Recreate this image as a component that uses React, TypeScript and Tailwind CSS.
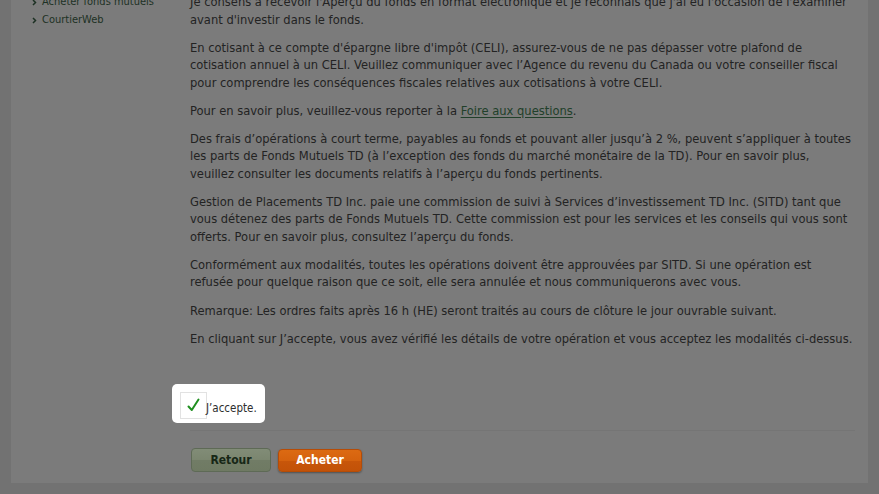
import React from "react";

const Chevron = () => (
  <svg width="5" height="7" viewBox="0 0 5 7" className="shrink-0">
    <path d="M1 1 L3.5 3.5 L1 6" stroke="#1d3124" strokeWidth="1.5" fill="none" />
  </svg>
);

const Check = () => (
  <svg width="13" height="14" viewBox="0 0 13 14">
    <path d="M1.5 8.5 L4.8 12 L11.5 1.5" stroke="#1f8f1f" strokeWidth="2" fill="none" strokeLinecap="round" strokeLinejoin="round" />
  </svg>
);

const paragraphs: React.ReactNode[][] = [
  [
    "Je consens à recevoir l'Aperçu du fonds en format électronique et je reconnais que j'ai eu l'occasion de l'examiner",
    "avant d'investir dans le fonds.",
  ],
  [
    "En cotisant à ce compte d'épargne libre d'impôt (CELI), assurez-vous de ne pas dépasser votre plafond de",
    "cotisation annuel à un CELI. Veuillez communiquer avec l’Agence du revenu du Canada ou votre conseiller fiscal",
    "pour comprendre les conséquences fiscales relatives aux cotisations à votre CELI.",
  ],
  [
    <>
      Pour en savoir plus, veuillez-vous reporter à la{" "}
      <a className="text-[#21402a] underline underline-offset-2">Foire aux questions</a>.
    </>,
  ],
  [
    "Des frais d’opérations à court terme, payables au fonds et pouvant aller jusqu’à 2 %, peuvent s’appliquer à toutes",
    "les parts de Fonds Mutuels TD (à l’exception des fonds du marché monétaire de la TD). Pour en savoir plus,",
    "veuillez consulter les documents relatifs à l’aperçu du fonds pertinents.",
  ],
  [
    "Gestion de Placements TD Inc. paie une commission de suivi à Services d’investissement TD Inc. (SITD) tant que",
    "vous détenez des parts de Fonds Mutuels TD. Cette commission est pour les services et les conseils qui vous sont",
    "offerts. Pour en savoir plus, consultez l’aperçu du fonds.",
  ],
  [
    "Conformément aux modalités, toutes les opérations doivent être approuvées par SITD. Si une opération est",
    "refusée pour quelque raison que ce soit, elle sera annulée et nous communiquerons avec vous.",
  ],
  ["Remarque: Les ordres faits après 16 h (HE) seront traités au cours de clôture le jour ouvrable suivant."],
  ["En cliquant sur J’accepte, vous avez vérifié les détails de votre opération et vous acceptez les modalités ci-dessus."],
];

export default function App() {
  return (
    <div
      className="w-[879px] h-[494px] overflow-hidden bg-[#727272] pl-[11px]"
      style={{ fontFamily: '"DejaVu Sans Condensed", "DejaVu Sans", sans-serif' }}
    >
      <div className="w-[857px] h-[483px] bg-[#7b7b7b] flex overflow-hidden">
        {/* Sidebar */}
        <aside className="w-[179px] shrink-0 pl-[21px] -mt-[7px] text-[11px] leading-[18px] text-[#1d3124]">
          <div className="flex items-center gap-[5px]">
            <Chevron />
            <span>Acheter fonds mutuels</span>
          </div>
          <div className="flex items-center gap-[5px]">
            <Chevron />
            <span>CourtierWeb</span>
          </div>
        </aside>

        {/* Main */}
        <main className="flex-1 pr-[13px] -mt-[7px] flex flex-col">
          <div className="text-[12.8px] leading-[17.5px] text-[#232323]">
            {paragraphs.map((lines, i) => (
              <p key={i} className="mb-[10.6px] whitespace-nowrap">
                {lines.map((l, j) => (
                  <React.Fragment key={j}>
                    {l}
                    {j < lines.length - 1 && <br />}
                  </React.Fragment>
                ))}
              </p>
            ))}
          </div>

          <div className="mt-[26px] -ml-[18px] w-[93px] h-[39px] bg-white rounded-[5px] pl-[8px] pt-[8px] flex items-start">
            <div className="w-[27px] h-[27px] border border-[#e2e2e2] bg-white flex items-center justify-center shrink-0">
              <Check />
            </div>
            <span className="-ml-[1px] mt-[9px] text-[11.5px] leading-[14px] text-[#2e2e2e]">J’accepte.</span>
          </div>

          <div className="mt-[7px] h-px bg-[#757575]" />

          <div className="mt-[17px] flex items-start gap-[7px] pl-[1px]">
            <button className="w-[80px] h-[24px] rounded-[4px] border border-[#5e6a56] bg-[linear-gradient(to_bottom,#818c77_0%,#7b866f_50%,#717c66_51%,#6f7a63_100%)] text-[12px] font-bold text-[#172716]">
              Retour
            </button>
            <button className="mt-[1px] w-[84px] h-[23px] rounded-[4px] border border-[#b54c07] bg-[linear-gradient(to_bottom,#dc6a12_0%,#d5620e_50%,#c8560a_51%,#c25208_100%)] text-[12px] font-bold text-white shadow-[0_1px_2px_rgba(0,0,0,0.35)]">
              Acheter
            </button>
          </div>
        </main>
      </div>
    </div>
  );
}
